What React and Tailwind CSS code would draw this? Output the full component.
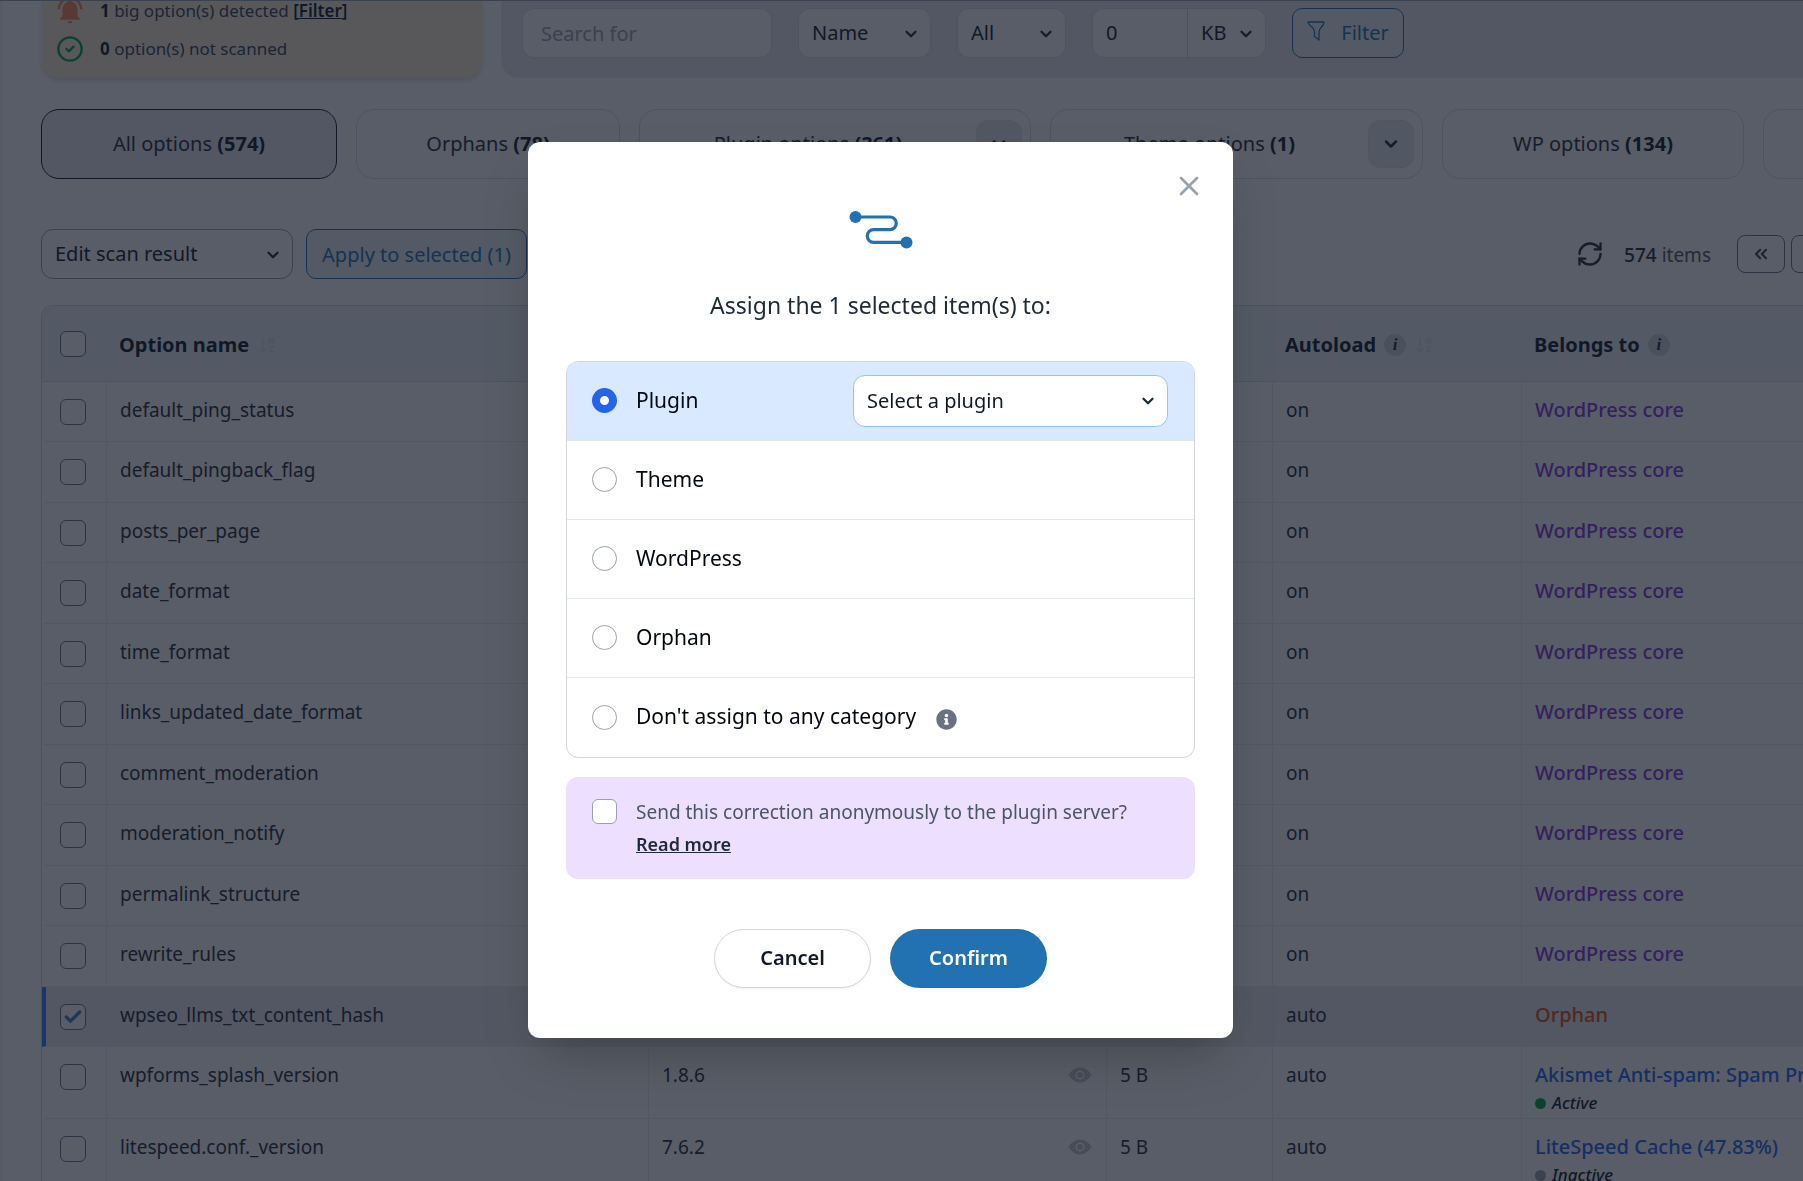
import React from "react";
import { ChevronDown, ChevronsLeft, ChevronLeft, RefreshCw, X, ArrowDownAZ, Check, CircleCheck } from "lucide-react";
import { MdNotificationsActive } from "react-icons/md";
import { FaInfoCircle } from "react-icons/fa";
import { IoEye } from "react-icons/io5";

const rows = [
  { name: "default_ping_status", autoload: "on", owner: "core" },
  { name: "default_pingback_flag", autoload: "on", owner: "core" },
  { name: "posts_per_page", autoload: "on", owner: "core" },
  { name: "date_format", autoload: "on", owner: "core" },
  { name: "time_format", autoload: "on", owner: "core" },
  { name: "links_updated_date_format", autoload: "on", owner: "core" },
  { name: "comment_moderation", autoload: "on", owner: "core" },
  { name: "moderation_notify", autoload: "on", owner: "core" },
  { name: "permalink_structure", autoload: "on", owner: "core" },
  { name: "rewrite_rules", autoload: "on", owner: "core" },
  { name: "wpseo_llms_txt_content_hash", autoload: "auto", owner: "orphan", selected: true },
  { name: "wpforms_splash_version", value: "1.8.6", size: "5 B", autoload: "auto", owner: "plugin", plugin: "Akismet Anti-spam: Spam Protection", active: true },
  { name: "litespeed.conf._version", value: "7.6.2", size: "5 B", autoload: "auto", owner: "plugin", plugin: "LiteSpeed Cache (47.83%)", active: false },
];

const targets = ["Plugin", "Theme", "WordPress", "Orphan", "Don't assign to any category"];

function Select({ label, options, className }) {
  return (
    <div className={"relative shrink-0 " + className}>
      <select aria-label={label} className="h-full w-full appearance-none bg-transparent pl-[13px] pr-8 text-xl text-gray-900 outline-none">
        {options.map((o) => <option key={o}>{o}</option>)}
      </select>
      <ChevronDown size={18} strokeWidth={3} className="pointer-events-none absolute top-4 right-2.5 text-gray-800" />
    </div>
  );
}

function Tab({ label, count, menu, active, className }) {
  return (
    <div className={"flex h-[70px] shrink-0 items-center rounded-[18px] border " + className + (active ? " border-gray-900 bg-[#ececf0]" : " border-[#dcdee2]")}>
      <button type="button" aria-label={label} className="h-full flex-1 text-xl text-gray-800">
        {count !== undefined && <>{label} <strong className="font-bold text-gray-900">({count})</strong></>}
      </button>
      {menu && (
        <button type="button" aria-label={label + " menu"} className="mr-2 flex h-12 w-[46px] items-center justify-center rounded-xl border border-gray-200 bg-[#e6eef2]">
          <ChevronDown size={20} strokeWidth={3} className="text-gray-800" />
        </button>
      )}
    </div>
  );
}

function Box({ label, checked }) {
  return (
    <span className="relative block h-[26px] w-[26px]">
      <input type="checkbox" aria-label={label} defaultChecked={checked} className="block h-full w-full appearance-none rounded-md border border-gray-500 bg-white" />
      {checked && <Check size={20} strokeWidth={4} className="pointer-events-none absolute top-[3px] left-[3px] text-[#3582c4]" />}
    </span>
  );
}

function Tip() {
  return (
    <span className="flex h-[22px] w-[22px] items-center justify-center rounded-full bg-gray-300 font-['Liberation_Serif',serif] text-[17px] leading-none font-bold text-gray-800 italic">i</span>
  );
}

function Owner({ row }) {
  if (row.owner === "core") return <a href="#core" className="text-xl leading-7 font-medium text-[#8b35dc]">WordPress core</a>;
  if (row.owner === "orphan") return <a href="#orphan" className="text-xl leading-7 font-medium text-[#d9530f]">Orphan</a>;
  return (
    <>
      <a href="#plugin" className="block text-xl leading-7 font-medium text-[#2563eb]">{row.plugin}</a>
      <div className="flex items-center gap-1.5 text-[17px] leading-7 font-medium text-gray-900 italic">
        <span className={"h-[11px] w-[11px] rounded-full " + (row.active ? "bg-green-600" : "bg-gray-400")} />
        {row.active ? "Active" : "Inactive"}
      </div>
    </>
  );
}

function OptionsTable() {
  const th = "border-b border-[#dcdee2] pt-0.5 pr-3.5 pl-[13px] text-left font-bold";
  return (
    <div className="mt-[26px] overflow-hidden rounded-tl-xl border-t border-l border-[#d5d8dd]">
      <table className="w-full table-fixed border-separate border-spacing-0 text-[19px] whitespace-nowrap text-gray-800">
        <colgroup>
          <col className="w-[64px]" /><col className="w-[542px]" /><col className="w-[458px]" />
          <col className="w-[166px]" /><col className="w-[249px]" /><col />
        </colgroup>
        <thead>
          <tr className="h-[76px] bg-[#eff6f9] text-xl text-gray-900">
            <th className="border-b border-[#dcdee2] pl-[18px]"><Box label="Select all" /></th>
            <th className={th}><span className="flex items-center gap-2">Option name <ArrowDownAZ size={20} className="text-[#e0e2ea]" /></span></th>
            <th className={th}>Value</th>
            <th className={th}>Size</th>
            <th className={th}><span className="flex items-center gap-2">Autoload <Tip /><ArrowDownAZ size={20} className="text-[#e0e2ea]" /></span></th>
            <th className={th}><span className="flex items-center gap-2">Belongs to <Tip /></span></th>
          </tr>
        </thead>
        <tbody>
          {rows.map((r) => {
            const tall = r.owner === "plugin";
            const td = "border-[#eceef1] border-b pt-3.5 pr-3.5 pb-0 leading-7 " + (r.selected ? "pl-3.5" : "border-l pl-[13px]");
            return (
              <tr key={r.name} className={"align-top " + (tall ? "h-[72px]" : "h-[60px] even:h-[61px]") + (r.selected ? " bg-[#ececf0]" : "")}>
                <td className={"border-b border-l-4 border-b-[#eceef1] pt-[17px] pl-3.5 " + (r.selected ? "border-l-blue-500" : "border-l-transparent")}>
                  <Box label={r.name} checked={r.selected} />
                </td>
                <td className={td}>{r.name}</td>
                <td className={td}>
                  {r.value && <span className="flex h-7 items-center justify-between">{r.value}<IoEye size={24} className="text-[#c6c8ce]" /></span>}
                </td>
                <td className={td}>{r.size}</td>
                <td className={td}>{r.autoload}</td>
                <td className={td}><Owner row={r} /></td>
              </tr>
            );
          })}
        </tbody>
      </table>
    </div>
  );
}

function AssignDialog() {
  return (
    <div className="fixed inset-0 flex items-center justify-center bg-[#111827]/70 pr-[42px] pb-0.5">
      <div role="dialog" aria-modal="true" aria-labelledby="assign-title" className="relative w-full max-w-[705px] rounded-xl bg-white px-[38px] pt-[68px] pb-[50px] shadow-2xl">
        <button type="button" aria-label="Close" className="absolute top-7 right-7 text-gray-400">
          <X size={32} strokeWidth={2} />
        </button>
        <svg viewBox="0 0 64 39" className="mx-auto block h-[39px] w-16 text-[#2271b1]" fill="none" stroke="currentColor" strokeWidth="3.2" aria-hidden="true">
          <path d="M6.5 7H41a6.3 6.3 0 0 1 0 12.6H24.7a6.3 6.3 0 0 0 0 12.8H58" />
          <circle cx="6.5" cy="7" r="6" fill="currentColor" stroke="none" />
          <circle cx="57.5" cy="32.4" r="6" fill="currentColor" stroke="none" />
        </svg>
        <h2 id="assign-title" className="mt-10 text-center text-[23px] leading-8 text-gray-800">Assign the 1 selected item(s) to:</h2>

        <div className="mt-10 divide-y divide-gray-200 overflow-hidden rounded-xl border border-gray-300 text-[21px] text-gray-950">
          {targets.map((t, i) => (
            <div key={t} className={"flex h-[79px] items-center pr-[26px] pl-[25px] " + (i === 0 ? "bg-[#d9e9ff]" : "")}>
              <input id={"target-" + i} type="radio" name="target" defaultChecked={i === 0} className="h-[25px] w-[25px] appearance-none rounded-full border border-gray-400 bg-white checked:border-8 checked:border-[#2563eb]" />
              <label htmlFor={"target-" + i} className="pl-[19px]">{t}</label>
              {i === 0 && <Select label="Plugin" options={["Select a plugin"]} className="ml-auto h-[52px] w-[315px] rounded-xl border border-blue-300 bg-white" />}
              {i === 4 && <FaInfoCircle size={21} className="mt-1 ml-5 text-gray-500" />}
            </div>
          ))}
        </div>

        <div className="mt-[19px] flex rounded-xl bg-[#eddfff] py-[19px] pr-4 pl-[26px]">
          <input id="send" type="checkbox" className="mt-[3px] h-[25px] w-[25px] shrink-0 appearance-none rounded-md border border-gray-400 bg-white" />
          <p className="pl-[19px] text-[19px] leading-8 text-gray-600">
            <label htmlFor="send">Send this correction anonymously to the plugin server?</label>{" "}
            <a href="#more" className="block w-fit text-lg leading-8 font-semibold text-gray-800 underline">Read more</a>
          </p>
        </div>

        <div className="mt-[50px] flex justify-center gap-[19px] text-xl font-semibold">
          <button type="button" className="h-[59px] w-[157px] rounded-full border border-gray-300 bg-white text-gray-900 shadow-xs">Cancel</button>
          <button type="button" className="h-[59px] w-[157px] rounded-full bg-[#2271b1] text-white">Confirm</button>
        </div>
      </div>
    </div>
  );
}

export default function App() {
  return (
    <div className="h-screen overflow-hidden border-t border-gray-400 bg-white font-['Noto_Sans','Open_Sans',sans-serif]">
      <div className="-mr-9 border-l-[3px] border-gray-100 pl-[38px]">
        <div className="flex h-[77px] gap-[18px]">
          <div className="flex w-[442px] shrink-0 flex-col justify-end gap-2.5 rounded-b-[18px] bg-[#ffeed8] pb-[15px] pl-4 text-[17px] text-gray-700 shadow-md">
            <div className="flex h-7 items-center gap-[15px]">
              <MdNotificationsActive size={30} className="-ml-0.5 shrink-0 text-[#fb8a4c]" />
              <span>
                <b className="text-gray-900">1</b> big option(s) detected <a href="#filter" className="font-semibold text-gray-900">[<span className="underline">Filter</span>]</a>
              </span>
            </div>
            <div className="flex h-7 items-center gap-4">
              <CircleCheck size={28} strokeWidth={2} className="-ml-px shrink-0 text-green-600" />
              <span><b className="text-gray-900">0</b> option(s) not scanned</span>
            </div>
          </div>
          <div className="flex flex-1 items-start gap-[26px] rounded-bl-[18px] bg-[#ececf0] pt-[7px] pl-[21px]">
            <input type="text" aria-label="Search for" placeholder="Search for" className="h-[50px] w-[250px] rounded-xl border border-[#dcdee2] bg-white px-[18px] text-xl placeholder:text-gray-400" />
            <Select label="Search in" options={["Name"]} className="h-[50px] w-[133px] rounded-xl border border-[#dcdee2] bg-white" />
            <Select label="Autoload" options={["All"]} className="h-[50px] w-[109px] rounded-xl border border-[#dcdee2] bg-white" />
            <div className="flex h-[50px] rounded-xl border border-[#dcdee2] bg-white">
              <input type="text" aria-label="Size" defaultValue="0" className="w-[95px] border-r border-gray-300 bg-transparent px-[13px] text-xl text-gray-900" />
              <Select label="Unit" options={["KB"]} className="h-full w-[77px]" />
            </div>
            <button type="button" className="flex h-[50px] w-28 items-center justify-center gap-4 rounded-[10px] border border-[#2271b1] bg-[#eff6f9] text-xl text-[#2271b1]">
              <svg viewBox="0 0 18 20" className="-mt-1 h-5 w-[18px]" fill="none" stroke="currentColor" strokeWidth="1.3" strokeLinejoin="round" aria-hidden="true">
                <path d="M1 1h16c0 2-1 3.500-2.500 5C12.500 8 12 9 12 11v8l-4.500-3.500V11c0-2-.5-3-2.500-5C3 4.500 1 3 1 1z" />
              </svg>
              Filter
            </button>
          </div>
        </div>

        <div className="mt-[31px] flex gap-[19px]">
          <Tab label="All options" count={574} active className="w-[296px]" />
          <Tab label="Orphans" count={78} className="w-[264px]" />
          <Tab label="Plugin options" count={361} menu className="w-[392px]" />
          <Tab label="Theme options" count={1} menu className="w-[373px]" />
          <Tab label="WP options" count={134} className="w-[302px]" />
          <Tab label="More options" className="w-[302px]" />
        </div>

        <div className="mt-[50px] flex items-center justify-between">
          <div className="flex gap-[13px]">
            <Select label="Bulk action" options={["Edit scan result"]} className="h-[50px] w-[252px] rounded-xl border border-gray-400 bg-white" />
            <button type="button" className="h-[50px] w-[221px] rounded-[10px] border border-[#2271b1] bg-[#eff6f9] pt-0.5 text-xl text-[#2271b1]">Apply to selected (1)</button>
          </div>
          <div className="flex items-center">
            <RefreshCw size={28} className="text-gray-800" />
            <span className="mx-5 pt-0.5 text-[19px] text-gray-600"><span className="font-medium text-gray-800">574</span> items</span>
            <button type="button" aria-label="First page" className="ml-1.5 flex h-[38px] w-12 items-center justify-center rounded-lg border border-gray-500 text-gray-700"><ChevronsLeft size={20} strokeWidth={2.5} /></button>
            <button type="button" aria-label="Previous page" className="ml-1.5 flex h-[38px] w-12 items-center justify-center rounded-lg border border-gray-500 text-gray-700"><ChevronLeft size={20} /></button>
          </div>
        </div>

        <OptionsTable />
      </div>
      <AssignDialog />
    </div>
  );
}
